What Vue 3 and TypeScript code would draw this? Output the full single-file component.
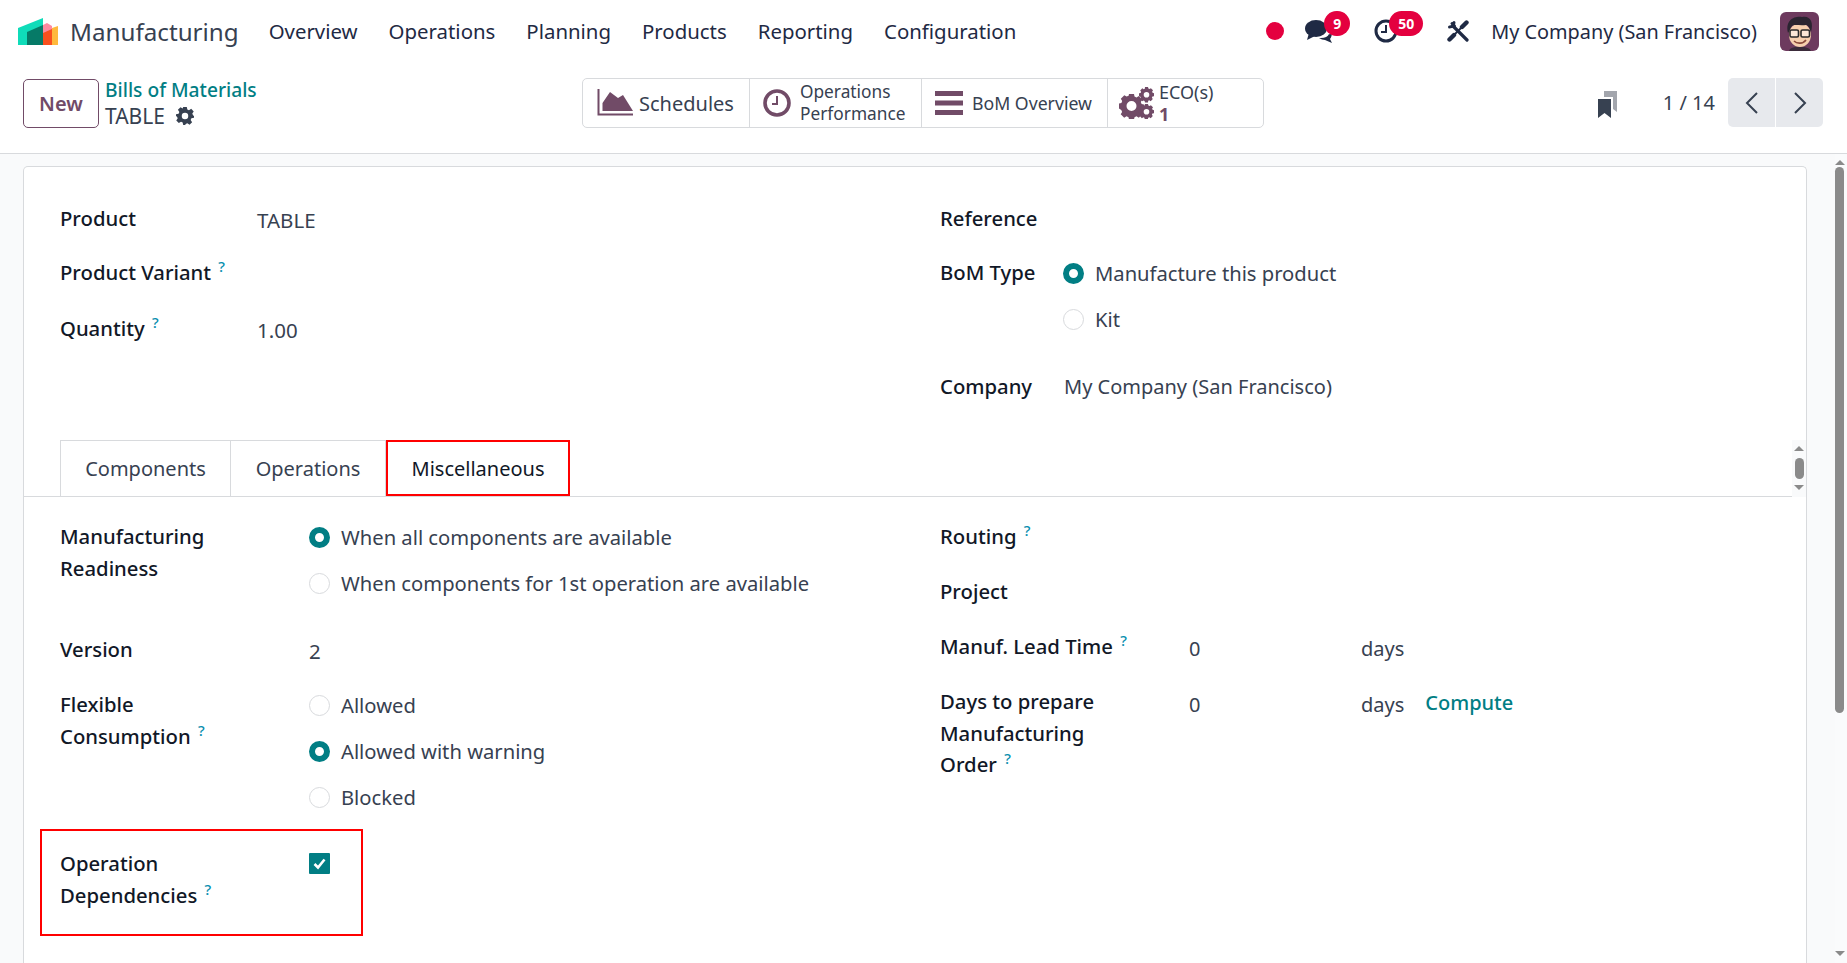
<script setup lang="ts">
const navItems: string[] = ['Overview', 'Operations', 'Planning', 'Products', 'Reporting', 'Configuration']
</script>

<template>
  <div class="app">
    <header class="navbar">
      <svg class="logo" viewBox="0 0 40 27" width="40" height="27">
        <path d="M0 10 L25 0 V27 H0Z" fill="#0fdcb9" />
        <path d="M25 7 L29 5 L34 8 V27 H25Z" fill="#ff8aa0" />
        <path d="M25 15 L34 11 V27 H25Z" fill="#f9501e" />
        <path d="M34 10 L40 8 V27 H34Z" fill="#ffb93c" />
        <path d="M9 14 L25 7 V27 H9Z" fill="#067a67" />
      </svg>
      <span class="brand">Manufacturing</span>
      <nav class="menu">
        <a v-for="item in navItems" :key="item" class="menu-item">{{ item }}</a>
      </nav>
      <div class="systray">
        <span class="rec"></span>
        <span class="tray chat">
          <svg viewBox="0 0 28 24" width="28" height="24" fill="#1f2a44">
            <ellipse cx="11" cy="9.5" rx="11" ry="8.5" />
            <path d="M4 14 L2 21 L10 17Z" />
            <path d="M16 19 C20 19 23 17.5 24 15 C26 16 27 14 27 12 C27 17 26 19 25 20 L27 24 L20 21 C18 21 16 20 14 19Z" />
          </svg>
          <b class="badge b9">9</b>
        </span>
        <span class="tray clock">
          <svg viewBox="0 0 24 24" width="24" height="24" fill="none" stroke="#1f2a44">
            <circle cx="12" cy="12" r="10" stroke-width="3" />
            <path d="M12 6 V13 H7" stroke-width="2" />
          </svg>
          <b class="badge b50">50</b>
        </span>
        <svg class="tools" viewBox="0 0 22 22" width="22" height="22" fill="none" stroke="#1f2a44" stroke-linecap="round">
          <path d="M6 6 L20 20" stroke-width="3.200" />
          <path d="M7 2.500 A4.500 4.500 0 0 1 2.500 7 M7.500 6 L5 3.500" stroke-width="3" />
          <path d="M19.500 2.500 L15 7" stroke-width="4.400" />
          <path d="M7 15 L2.500 19.500" stroke-width="4.400" />
          <path d="M14 8 L8 14" stroke-width="1.800" />
        </svg>
        <span class="company">My Company (San Francisco)</span>
        <svg class="avatar" viewBox="0 0 39 39" width="39" height="39">
          <rect width="39" height="39" rx="6" fill="#6d3a5e" />
          <path d="M9 39 C10 33 29 33 31 39Z" fill="#3b2b3a" />
          <ellipse cx="20" cy="23" rx="11" ry="12" fill="#f6cfae" />
          <path d="M8 21 C5 8 14 4 22 5 C30 3 34 10 31 20 C29 15 28 13 26 13 C20 14 14 12 12 14 C10 16 10 18 8 21Z" fill="#2a2430" />
          <rect x="10" y="18" width="8.500" height="7" rx="1.500" fill="#fff" fill-opacity=".5" stroke="#2a2a2a" stroke-width="1.600" />
          <rect x="21" y="18" width="8.500" height="7" rx="1.500" fill="#fff" fill-opacity=".5" stroke="#2a2a2a" stroke-width="1.600" />
          <path d="M14 29 C17 32 23 32 26 28" fill="none" stroke="#8a4a3a" stroke-width="1.600" />
        </svg>
      </div>
    </header>

    <section class="control">
      <button class="btn-new">New</button>
      <div class="crumbs">
        <a class="crumb-link">Bills of Materials</a>
        <div class="crumb-cur">
          <span>TABLE</span>
          <svg class="gear" viewBox="0 0 20 20" width="18" height="18">
            <path fill="#374151" fill-rule="evenodd" d="M8 0h4l.6 2.800 1.800.8L16.900 2l2.800 2.900-1.600 2.400.8 1.800L20 10v2l-2.900.6-.8 1.800 1.600 2.500-2.800 2.800-2.500-1.600-1.800.8L10.200 20H8l-.6-2.900-1.800-.8-2.500 1.600L.3 15l1.600-2.500-.8-1.800L0 10V8l2.900-.6.8-1.800L2.100 3 5 .2l2.400 1.600zM10 6.400a3.600 3.600 0 1 0 0 7.200 3.600 3.600 0 0 0 0-7.200z" />
          </svg>
        </div>
      </div>
      <div class="stats">
        <div class="stat s1">
          <svg viewBox="0 0 36 28" width="36" height="28">
            <path d="M1.500 0 V25.500 H36" fill="none" stroke="#714b67" stroke-width="2" />
            <path d="M5.500 22 V14 L13 3 L21 9 L26 6 L36 22Z" fill="#714b67" />
          </svg>
          <span class="stat-big">Schedules</span>
        </div>
        <div class="stat s2">
          <svg viewBox="0 0 28 28" width="28" height="28" fill="none" stroke="#714b67">
            <circle cx="14" cy="14" r="12" stroke-width="3.600" />
            <path d="M14 7 V15 H9" stroke-width="2" />
          </svg>
          <span class="stat-two">Operations<br />Performance</span>
        </div>
        <div class="stat s3">
          <svg viewBox="0 0 28 24" width="28" height="24" fill="#714b67">
            <rect y="0" width="28" height="5" />
            <rect y="9.500" width="28" height="5" />
            <rect y="19" width="28" height="5" />
          </svg>
          <span class="stat-mid">BoM Overview</span>
        </div>
        <div class="stat s4">
          <svg viewBox="0 0 36 32" width="36" height="32">
            <g fill="#714b67">
              <path fill-rule="evenodd" d="M11 7h5l.5 2.600 2 .9 2.300-1.400 3.400 3.500-1.400 2.300.8 2 2.400.5v5l-2.400.5-.8 2 1.400 2.300-3.400 3.500-2.300-1.400-2 .9-.5 2.300h-5l-.5-2.300-2-.9-2.300 1.400-3.500-3.500 1.400-2.300-.8-2L1 21.500v-5l2.400-.5.8-2-1.400-2.300 3.500-3.500 2.300 1.400 2-.9zM13.500 14a5 5 0 1 0 0 10 5 5 0 0 0 0-10z" />
              <path fill-rule="evenodd" d="M27 0h3l.4 1.600 1.100.5 1.400-.9 2.100 2.100-.9 1.400.5 1.100L36 6.200v3l-1.600.4-.5 1.100.9 1.400-2.100 2.100-1.400-.9-1.100.5L30 15.500h-3l-.4-1.600-1.100-.5-1.400.9-2.100-2.100.9-1.400-.5-1.100L21 9.300v-3l1.600-.4.5-1.100-.9-1.400 2.100-2.100 1.400.9 1.100-.5zM28.500 5a2.800 2.800 0 1 0 0 5.600 2.800 2.800 0 0 0 0-5.600z" />
              <path fill-rule="evenodd" d="M27 17h3l.4 1.600 1.100.5 1.400-.9 2.100 2.100-.9 1.400.5 1.100 1.400.4v3l-1.600.4-.5 1.100.9 1.400-2.100 2.100-1.400-.9-1.100.5-.4 1.600h-3l-.4-1.600-1.100-.5-1.400.9-2.100-2.100.9-1.400-.5-1.100-1.600-.4v-3l1.600-.4.5-1.100-.9-1.400 2.100-2.100 1.400.9 1.100-.5zM28.500 22a2.800 2.800 0 1 0 0 5.600 2.800 2.800 0 0 0 0-5.600z" />
            </g>
          </svg>
          <span class="stat-eco">ECO(s)<br /><b>1</b></span>
        </div>
      </div>
      <div class="cp-right">
        <svg class="bookmark" viewBox="0 0 19 27" width="19" height="27">
          <path d="M6 0 H19 V21 L15 18 V6 H6Z" fill="#a3a6ad" />
          <path d="M0 8 H13 V27 L6.500 22 L0 27Z" fill="#374151" />
        </svg>
        <span class="pager">1 / 14</span>
        <div class="pager-btns">
          <button class="pg">
            <svg viewBox="0 0 14 24" width="14" height="24" fill="none" stroke="#374151" stroke-width="2"><path d="M12 2 L2 12 L12 22" /></svg>
          </button>
          <button class="pg">
            <svg viewBox="0 0 14 24" width="14" height="24" fill="none" stroke="#374151" stroke-width="2"><path d="M2 2 L12 12 L2 22" /></svg>
          </button>
        </div>
      </div>
    </section>

    <main class="content">
      <div class="scroller">
        <article class="card">
          <div class="top-form">
            <div class="fcol">
              <div class="row r-top1"><label class="lbl l197">Product</label><span class="val tbl">TABLE</span></div>
              <div class="row r-top2"><label class="lbl l197">Product Variant <sup class="q">?</sup></label></div>
              <div class="row r-top3"><label class="lbl l197">Quantity <sup class="q">?</sup></label><span class="val tbl">1.00</span></div>
            </div>
            <div class="fcol">
              <div class="row r-top1"><label class="lbl">Reference</label></div>
              <div class="row r-top2b">
                <label class="lbl l123">BoM Type</label>
                <div class="radios">
                  <div class="opt"><i class="radio on"></i>Manufacture this product</div>
                  <div class="opt"><i class="radio"></i>Kit</div>
                </div>
              </div>
              <div class="row r-company"><label class="lbl l124">Company</label><span class="val">My Company (San Francisco)</span></div>
            </div>
          </div>

          <div class="tabbar">
            <div class="tabs">
              <div class="tab t1">Components</div>
              <div class="tab t2">Operations</div>
              <div class="tab t3">Miscellaneous</div>
            </div>
            <div class="tabscroll">
              <span class="arr up"></span>
              <span class="thumb-small"></span>
              <span class="arr down"></span>
            </div>
          </div>

          <div class="misc">
            <div class="mcol">
              <div class="mrow m-ready">
                <label class="lbl l249">Manufacturing<br />Readiness</label>
                <div class="radios">
                  <div class="opt"><i class="radio on"></i>When all components are available</div>
                  <div class="opt"><i class="radio"></i>When components for 1st operation are available</div>
                </div>
              </div>
              <div class="mrow m-ver"><label class="lbl l249">Version</label><span class="val tbl">2</span></div>
              <div class="mrow m-flex">
                <label class="lbl l249">Flexible<br />Consumption <sup class="q">?</sup></label>
                <div class="radios">
                  <div class="opt"><i class="radio"></i>Allowed</div>
                  <div class="opt"><i class="radio on"></i>Allowed with warning</div>
                  <div class="opt"><i class="radio"></i>Blocked</div>
                </div>
              </div>
              <div class="mrow m-dep">
                <div class="outline">
                  <label class="lbl l249">Operation<br />Dependencies <sup class="q">?</sup></label>
                  <i class="check">
                    <svg viewBox="0 0 21 21" width="21" height="21"><path d="M5.500 11 L9 14.500 L15.500 6.500" fill="none" stroke="#fff" stroke-width="2.600" /></svg>
                  </i>
                </div>
              </div>
            </div>
            <div class="mcol">
              <div class="rrow rr1"><label class="lbl">Routing <sup class="q">?</sup></label></div>
              <div class="rrow rr2"><label class="lbl">Project</label></div>
              <div class="rrow rr3">
                <label class="lbl l249">Manuf. Lead Time <sup class="q">?</sup></label>
                <span class="val num">0</span><span class="val off">days</span>
              </div>
              <div class="rrow rr4">
                <label class="lbl l249">Days to prepare<br />Manufacturing<br />Order <sup class="q">?</sup></label>
                <span class="val num">0</span><span class="val off">days</span>
                <a class="compute">Compute</a>
              </div>
            </div>
          </div>
        </article>
      </div>
      <div class="vbar">
        <span class="arr up"></span>
        <span class="thumb"></span>
        <span class="spacer"></span>
        <span class="arr down"></span>
      </div>
    </main>
  </div>
</template>

<style>
html, body { margin: 0; padding: 0; overflow: hidden; }
</style>

<style scoped>
.app {
  width: 1847px; height: 963px; display: flex; flex-direction: column; overflow: hidden;
  font-family: "Noto Sans", "Open Sans", sans-serif; font-size: 20px; color: #374151; background: #fff;
}
.navbar { height: 62px; display: flex; align-items: center; padding-left: 18px; flex: none; }
.logo { margin-top: 1px; }
.brand { font-size: 24.200px; margin-left: 12px; color: #374151; }
.menu { display: flex; margin-left: 30px; gap: 31px; }
.menu-item { color: #1f2a44; font-size: 20.400px; }
.systray { margin-left: auto; display: flex; align-items: center; padding-right: 28px; }
.rec { width: 18px; height: 18px; border-radius: 50%; background: #e4003f; }
.tray { position: relative; display: flex; }
.chat { margin-left: 21px; }
.clock { margin-left: 41px; }
.badge {
  position: absolute; top: -8px; height: 25px; border-radius: 13px; background: #e4003f; color: #fff;
  font-size: 14px; font-weight: 700; display: flex; align-items: center; justify-content: center;
}
.b9 { left: 19px; width: 26px; }
.b50 { left: 15px; width: 34px; }
.tools { margin-left: 49px; }
.company { margin-left: 22px; color: #1f2a44; font-size: 19.850px; white-space: nowrap; }
.avatar { margin-left: 23px; }

.control { height: 92px; flex: none; display: flex; align-items: flex-start; padding: 16px 24px 0 23px; border-bottom: 1px solid #d8dadd; box-sizing: border-box; }
.btn-new {
  width: 76px; height: 49px; margin-top: 1px; border: 1px solid #714b67; border-radius: 5px; background: #fff; color: #714b67;
  font: 600 20px "Noto Sans", sans-serif; padding: 0; flex: none;
}
.crumbs { margin-left: 6px; width: 154px; flex: none; display: flex; flex-direction: column; line-height: 26px; margin-top: -1px; white-space: nowrap; }
.crumb-link { color: #017e84; font-weight: 500; font-size: 19.200px; }
.crumb-cur { display: flex; align-items: center; gap: 11px; font-size: 21px; }
.stats {
  margin-left: 323px; width: 682px; height: 50px; flex: none; display: flex; border: 1px solid #d8dadd; border-radius: 5px; box-sizing: border-box;
}
.stat { display: flex; align-items: center; border-right: 1px solid #d8dadd; box-sizing: border-box; height: 100%; white-space: nowrap; }
.stat:last-child { border-right: 0; }
.s1 { width: 167px; padding-left: 14px; gap: 6px; }
.s2 { width: 172px; padding-left: 13px; gap: 9px; }
.s3 { width: 186px; padding-left: 13px; gap: 9px; }
.s4 { flex: 1; padding-left: 10px; gap: 5px; }
.stat-big { font-size: 20px; }
.stat-two { font-size: 17.300px; line-height: 22px; }
.stat-mid { font-size: 17.700px; }
.stat-eco { font-size: 18px; line-height: 22px; }
.stat-eco b { color: #714b67; font-weight: 700; }
.cp-right { margin-left: auto; display: flex; align-items: flex-start; }
.bookmark { margin-top: 13px; }
.pager { margin-left: 46px; margin-top: 11px; font-size: 20px; }
.pager-btns { display: flex; gap: 1px; margin-left: 13px; }
.pg { width: 47px; height: 49px; background: #e7e9ed; border: 0; padding: 0; display: flex; align-items: center; justify-content: center; }
.pg:first-child { border-radius: 5px 0 0 5px; }
.pg:last-child { border-radius: 0 5px 5px 0; }

.content { flex: 1; min-height: 0; display: flex; background: #f9fafb; }
.scroller { flex: 1; min-width: 0; padding: 12px 28px 0 23px; overflow: hidden; }
.card { background: #fff; border: 1px solid #d8dadd; border-bottom: 0; border-radius: 5px 5px 0 0; height: 900px; box-sizing: border-box; }
.top-form { display: grid; grid-template-columns: 880px 1fr; padding: 36px 0 0 36px; height: 273px; box-sizing: border-box; }
.row { display: flex; align-items: flex-start; line-height: 32px; }
.r-top1 { height: 54px; }
.r-top2 { height: 56px; }
.r-top3 { height: 40px; }
.r-top2b { height: 114px; }
.r-company { height: 32px; }
.lbl { font-weight: 500; font-size: 20.300px; color: #111827; flex: none; line-height: 31.500px; }
.l197 { width: 197px; }
.l123 { width: 123px; }
.l124 { width: 124px; }
.l249 { width: 249px; }
.q { color: #0a8fb0; font-size: 15px; font-weight: 500; vertical-align: 8px; line-height: 0; margin-left: 2px; }
.val { line-height: 32px; white-space: nowrap; }
.tbl { font-size: 20.500px; margin-top: 1px; }
.radios { display: flex; flex-direction: column; }
.opt { display: flex; align-items: center; height: 32px; margin-bottom: 14px; gap: 11px; white-space: nowrap; font-size: 20.200px; }
.radio { width: 21px; height: 21px; border-radius: 50%; border: 1px solid #d8dadd; box-sizing: border-box; background: #fff; flex: none; }
.radio.on { border: 6px solid #017e84; }

.tabbar { display: flex; height: 57px; }
.tabs { flex: 1; display: flex; padding-left: 36px; border-bottom: 1px solid #d8dadd; box-sizing: border-box; }
.tab { height: 56px; display: flex; align-items: center; justify-content: center; box-sizing: border-box; border: 1px solid #d8dadd; border-bottom: 0; margin-right: -1px; color: #374151; }
.t1 { width: 171px; }
.t2 { width: 156px; }
.t3 { width: 184px; margin-left: 1px; border: 2px solid #f00; color: #111827; }
.tabscroll { width: 14px; background: #f9fafb; display: flex; flex-direction: column; align-items: center; padding-top: 6px; box-sizing: border-box; }
.thumb-small { width: 9px; height: 21px; border-radius: 5px; background: #8a8a8a; margin: 7px 0 6px; }

.misc { display: grid; grid-template-columns: 880px 1fr; padding: 24px 0 0 36px; }
.mrow { display: flex; }
.m-ready { height: 113px; }
.m-ver { height: 55px; }
.m-flex { height: 140px; }
.m-dep { margin-left: -20px; }
.outline { display: flex; width: 323px; height: 107px; border: 2px solid #f00; box-sizing: border-box; padding: 17px 0 0 18px; }
.check { width: 21px; height: 21px; background: #017e84; display: flex; border-radius: 1px; margin-top: 5px; }
.rrow { display: flex; }
.rr1, .rr2, .rr3 { height: 55px; }
.num { width: 172px; flex: none; margin-top: 2px; }
.off { margin-top: 2px; }
.rr4 .num, .rr4 .off { margin-top: 3px; }
.compute { color: #017e84; font-weight: 500; font-size: 20px; margin-left: 21px; line-height: 32px; margin-top: 1px; }

.vbar { width: 12px; flex: none; background: #fafbfc; display: flex; flex-direction: column; align-items: center; padding: 6px 3px 7px 0; box-sizing: border-box; }
.thumb { width: 9px; height: 546px; border-radius: 5px; background: #8a8a8a; margin-top: 2px; }
.spacer { flex: 1; }
.arr { width: 0; height: 0; border-left: 5px solid transparent; border-right: 5px solid transparent; display: block; }
.arr.up { border-bottom: 5px solid #8a8a8a; }
.arr.down { border-top: 5px solid #8a8a8a; }
</style>
